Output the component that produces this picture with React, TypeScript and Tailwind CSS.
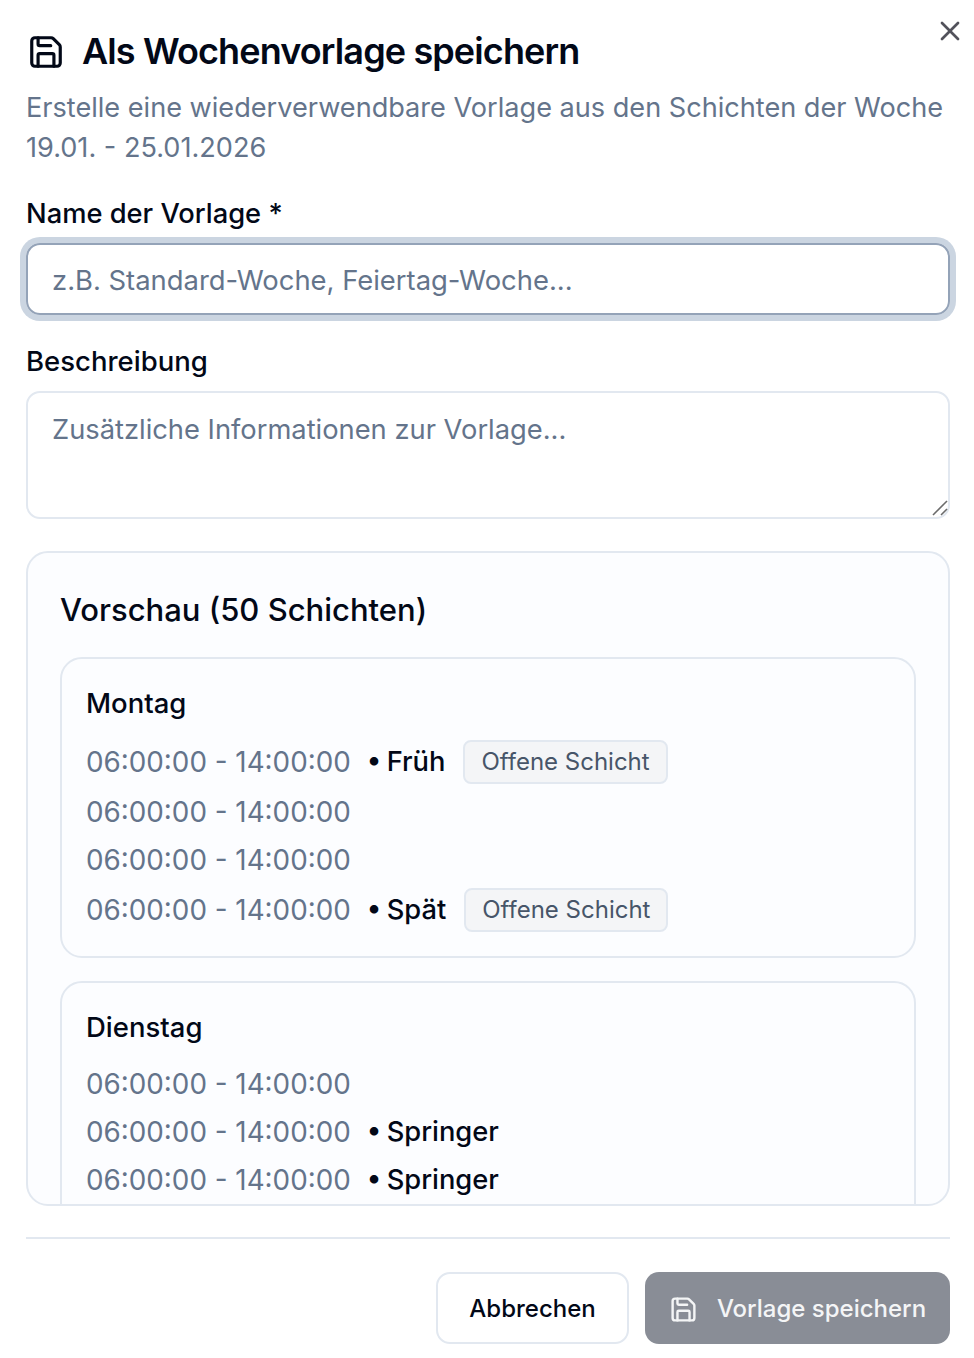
import { Save, X } from "lucide-react";

type Row = { name?: string; open?: boolean };

const days: { title: string; rows: Row[] }[] = [
  {
    title: "Montag",
    rows: [{ name: "Früh", open: true }, {}, {}, { name: "Spät", open: true }],
  },
  {
    title: "Dienstag",
    rows: [{}, { name: "Springer" }, { name: "Springer" }],
  },
];

export default function App() {
  return (
    <div className="relative h-[1358px] w-full overflow-hidden bg-white pl-[26px] pr-[24px] pt-[32px] font-['Inter',sans-serif] text-[#020817]">
      <button className="absolute right-[8px] top-[15px] text-[#52525b]">
        <X size={32} strokeWidth={2} />
      </button>

      {/* Header */}
      <div className="flex h-[40px] items-center gap-[17px]">
        <Save size={38} strokeWidth={2} className="ml-px" />
        <h2 className="-mt-[2px] text-[36px] font-semibold leading-[40px] tracking-[-0.88px]">
          Als Wochenvorlage speichern
        </h2>
      </div>
      <p className="mt-[16px] text-[27.12px] leading-[40px] text-[#64748b]">
        Erstelle eine wiederverwendbare Vorlage aus den Schichten der Woche 19.01. - 25.01.2026
      </p>

      {/* Form */}
      <label className="mt-[26px] block text-[27.3px] font-medium leading-[40px]">Name der Vorlage *</label>
      <input
        className="mt-[9px] block h-[72px] w-full rounded-[14px] border-2 border-[#94a3b8] px-[24px] pt-[2px] text-[27.4px] outline-none ring-[6px] ring-[#cbd5e1] placeholder:text-[#64748b]"
        placeholder="z.B. Standard-Woche, Feiertag-Woche..."
      />
      <label className="mt-[26px] block text-[27.5px] font-medium leading-[40px]">Beschreibung</label>
      <div className="relative mt-[10px]">
        <textarea
          className="block h-[128px] w-full resize-none rounded-[14px] border-2 border-[#e2e8f0] px-[24px] py-[17px] text-[27.3px] leading-[40px] outline-none placeholder:text-[#64748b]"
          placeholder="Zusätzliche Informationen zur Vorlage..."
        />
        <svg className="absolute bottom-[3px] right-[2px] h-[16px] w-[16px] text-[#6b6b6b]" viewBox="0 0 16 16" fill="none" stroke="currentColor" strokeWidth="1.6">
          <path d="M1 15 L15 1" />
          <path d="M9 15 L15 9" />
        </svg>
      </div>

      {/* Vorschau */}
      <div className="mt-[32px] h-[655px] overflow-hidden rounded-[22px] border-2 border-[#e2e8f0] bg-[#fcfdff] px-[32px] pt-[35px]">
        <h3 className="text-[31px] font-medium leading-[44px]">Vorschau (50 Schichten)</h3>
        <div className="mt-[25px] flex flex-col gap-[23px]">
          {days.map((day) => (
            <div key={day.title} className="rounded-[22px] border-2 border-[#e2e8f0] px-[24px] pb-[24px] pt-[24px]">
              <h4 className="text-[27.5px] font-medium leading-[40px]">{day.title}</h4>
              <div className="mt-[17px] flex flex-col gap-[8px]">
                {day.rows.map((row, i) => (
                  <div key={i} className="flex items-center gap-[16px] text-[27.8px] leading-[40px]">
                    <span className="text-[#64748b]">06:00:00 - 14:00:00</span>
                    {row.name && <span className="text-[27.3px] font-medium [word-spacing:-2px]">• {row.name}</span>}
                    {row.open && (
                      <span className="ml-[2px] rounded-[8px] border-2 border-[#e2e8f0] bg-[#f4f5f7] px-[16px] text-[24px] leading-[40px] text-[#475569]">
                        Offene Schicht
                      </span>
                    )}
                  </div>
                ))}
              </div>
            </div>
          ))}
        </div>
      </div>

      {/* Footer */}
      <div className="mt-[31px] flex justify-end gap-[16px] border-t-2 border-[#e2e8f0] pt-[33px]">
        <button className="h-[72px] w-[193px] rounded-[14px] border-2 border-[#e2e8f0] bg-white pt-[2px] text-[24px] font-medium">
          Abbrechen
        </button>
        <button className="flex h-[72px] w-[305px] items-center justify-center gap-[19px] rounded-[14px] bg-[#898d96] pt-[2px] text-[24px] font-medium text-[#f4f5f6]">
          <Save size={29} strokeWidth={2} />
          Vorlage speichern
        </button>
      </div>
    </div>
  );
}
